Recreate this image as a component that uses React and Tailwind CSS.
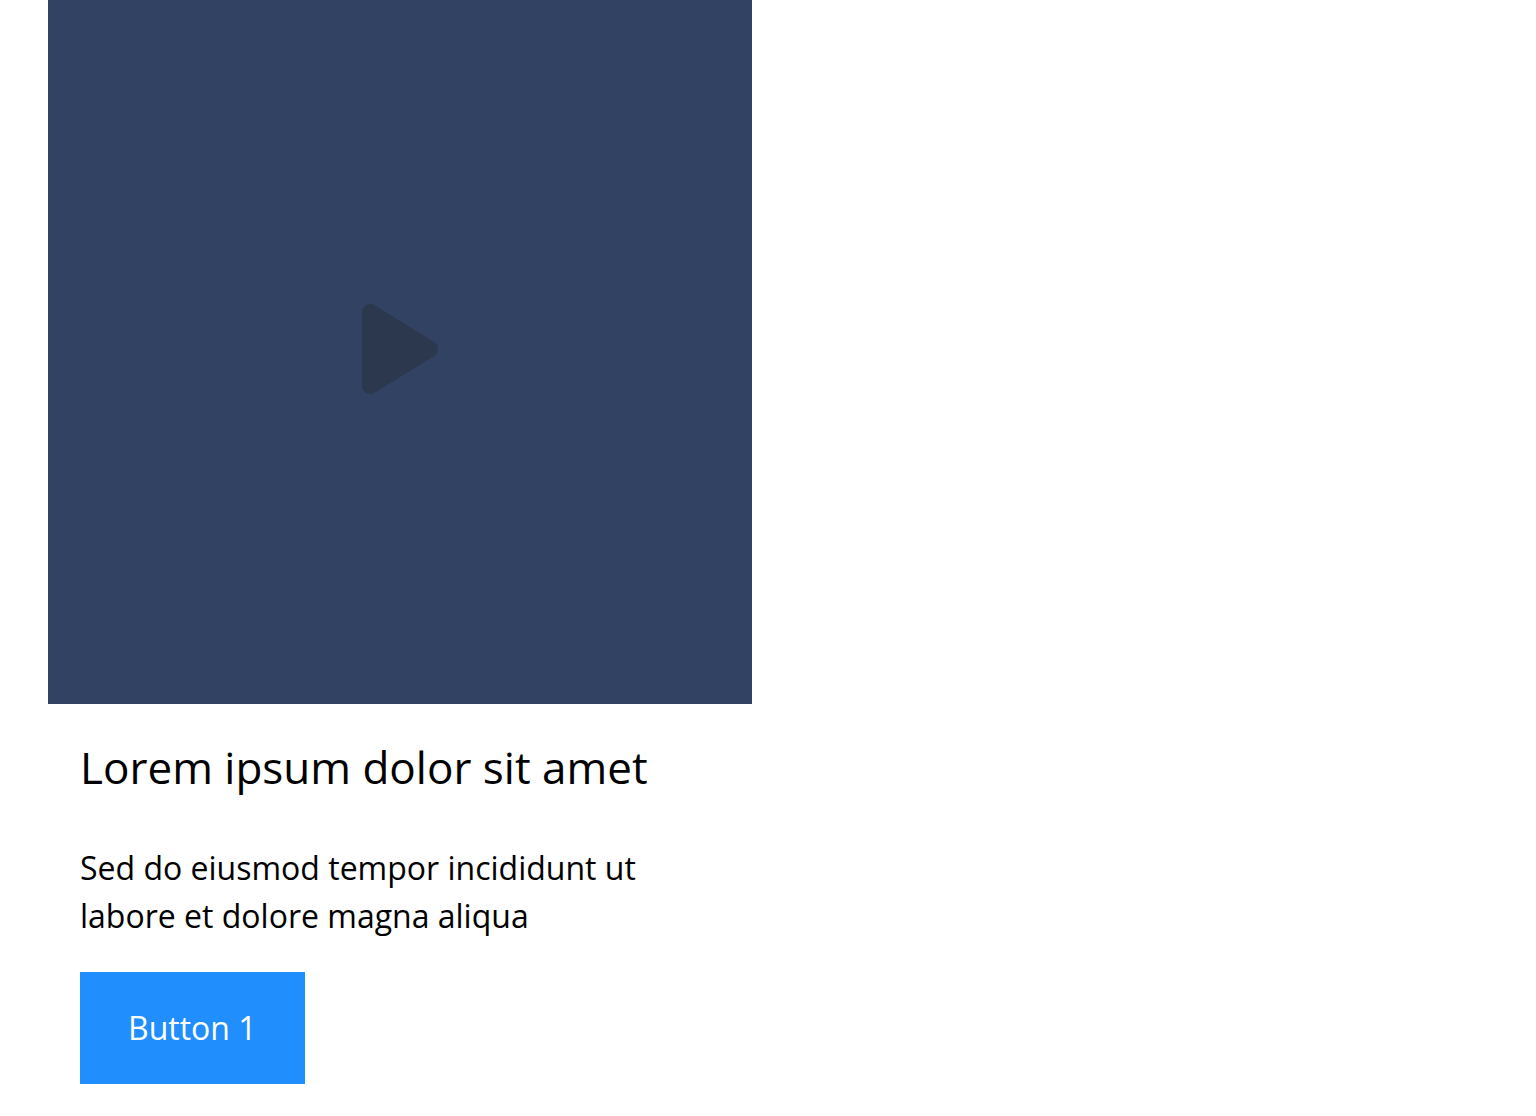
import React from "react";

const PlayIcon = () => (
  <svg width="76" height="96" viewBox="0 0 76 96" fill="#2c384e" aria-hidden="true">
    <path d="M0 8C0 1.800 6.700-2 12.100 1.100L72.200 38.100C77.300 41.200 77.300 48.800 72.200 51.900L12.100 88.900C6.700 92 0 88.200 0 82Z" />
  </svg>
);

const Card = ({ title, text, buttonLabel }) => {
  return (
    <article className="flex flex-col bg-white">
      <button
        type="button"
        aria-label="Play video"
        className="w-full aspect-square flex items-center justify-center bg-[#324263]"
      >
        <PlayIcon />
      </button>
      <div className="flex flex-col items-start px-8 pt-8 pb-8">
        <h2 className="text-[44px] leading-[62px] mb-[46px]">{title}</h2>
        <p className="text-[32px] leading-[48px] mb-8">{text}</p>
        <button type="button" className="bg-[#208efc] text-white text-[32px] leading-[48px] px-12 py-8">
          {buttonLabel}
        </button>
      </div>
    </article>
  );
};

export default function App() {
  return (
    <main className="grid grid-cols-2 gap-8 px-12 bg-white text-black font-['Open_Sans',sans-serif]">
      <Card
        title="Lorem ipsum dolor sit amet"
        text="Sed do eiusmod tempor incididunt ut labore et dolore magna aliqua"
        buttonLabel="Button 1"
      />
    </main>
  );
}
